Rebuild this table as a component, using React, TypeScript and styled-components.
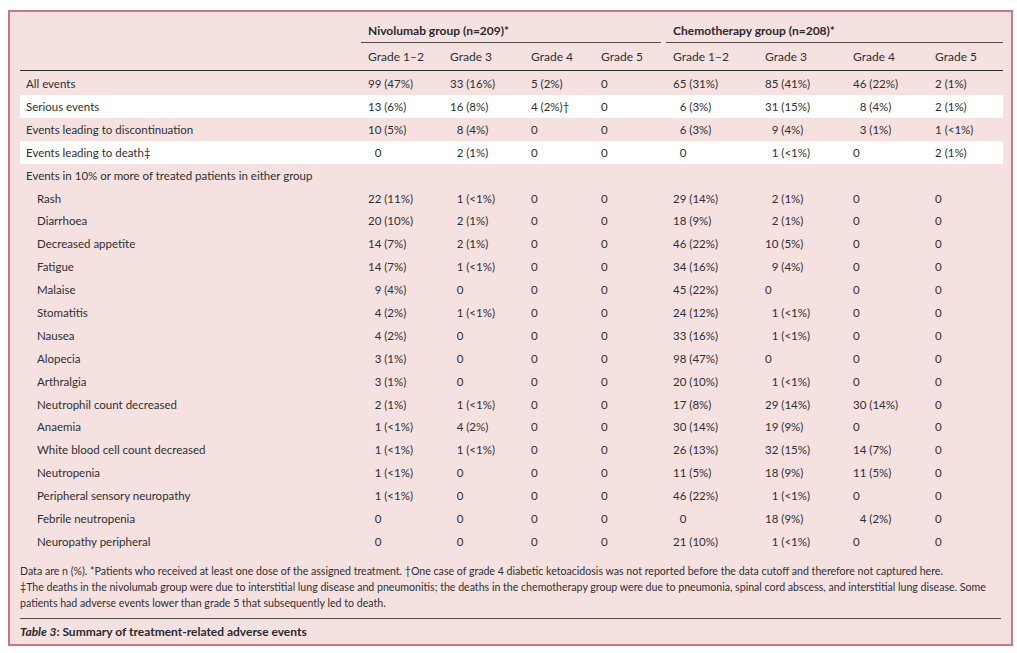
import React from 'react';
import styled, { createGlobalStyle } from 'styled-components';

const GlobalStyle = createGlobalStyle`
  html, body {
    margin: 0;
    padding: 0;
    background: #ffffff;
  }
  body {
    font-family: Lato, 'Open Sans', 'Liberation Sans', sans-serif;
    color: #2f2f2f;
  }
`;

// \u2007 = figure space, used to keep the digits lined up as in the print table
const F = '\u2007';

type Row = {
  label: string;
  values?: string[];
  indent?: boolean;
  stripe?: boolean;
};

const summaryRows: Row[] = [
  { label: 'All events', values: ['99 (47%)', '33 (16%)', '5 (2%)', '0', '65 (31%)', '85 (41%)', '46 (22%)', '2 (1%)'] },
  { label: 'Serious events', stripe: true, values: ['13 (6%)', '16 (8%)', '4 (2%)†', '0', F + '6 (3%)', '31 (15%)', F + '8 (4%)', '2 (1%)'] },
  { label: 'Events leading to discontinuation', values: ['10 (5%)', F + '8 (4%)', '0', '0', F + '6 (3%)', F + '9 (4%)', F + '3 (1%)', '1 (<1%)'] },
  { label: 'Events leading to death‡', stripe: true, values: [F + '0', F + '2 (1%)', '0', '0', F + '0', F + '1 (<1%)', '0', '2 (1%)'] },
  { label: 'Events in 10% or more of treated patients in either group' },
];

const eventRows: Row[] = [
  { label: 'Rash', values: ['22 (11%)', F + '1 (<1%)', '0', '0', '29 (14%)', F + '2 (1%)', '0', '0'] },
  { label: 'Diarrhoea', values: ['20 (10%)', F + '2 (1%)', '0', '0', '18 (9%)', F + '2 (1%)', '0', '0'] },
  { label: 'Decreased appetite', values: ['14 (7%)', F + '2 (1%)', '0', '0', '46 (22%)', '10 (5%)', '0', '0'] },
  { label: 'Fatigue', values: ['14 (7%)', F + '1 (<1%)', '0', '0', '34 (16%)', F + '9 (4%)', '0', '0'] },
  { label: 'Malaise', values: [F + '9 (4%)', F + '0', '0', '0', '45 (22%)', '0', '0', '0'] },
  { label: 'Stomatitis', values: [F + '4 (2%)', F + '1 (<1%)', '0', '0', '24 (12%)', F + '1 (<1%)', '0', '0'] },
  { label: 'Nausea', values: [F + '4 (2%)', F + '0', '0', '0', '33 (16%)', F + '1 (<1%)', '0', '0'] },
  { label: 'Alopecia', values: [F + '3 (1%)', F + '0', '0', '0', '98 (47%)', '0', '0', '0'] },
  { label: 'Arthralgia', values: [F + '3 (1%)', F + '0', '0', '0', '20 (10%)', F + '1 (<1%)', '0', '0'] },
  { label: 'Neutrophil count decreased', values: [F + '2 (1%)', F + '1 (<1%)', '0', '0', '17 (8%)', '29 (14%)', '30 (14%)', '0'] },
  { label: 'Anaemia', values: [F + '1 (<1%)', F + '4 (2%)', '0', '0', '30 (14%)', '19 (9%)', '0', '0'] },
  { label: 'White blood cell count decreased', values: [F + '1 (<1%)', F + '1 (<1%)', '0', '0', '26 (13%)', '32 (15%)', '14 (7%)', '0'] },
  { label: 'Neutropenia', values: [F + '1 (<1%)', F + '0', '0', '0', '11 (5%)', '18 (9%)', '11 (5%)', '0'] },
  { label: 'Peripheral sensory neuropathy', values: [F + '1 (<1%)', F + '0', '0', '0', '46 (22%)', F + '1 (<1%)', '0', '0'] },
  { label: 'Febrile neutropenia', values: [F + '0', F + '0', '0', '0', F + '0', '18 (9%)', F + '4 (2%)', '0'] },
  { label: 'Neuropathy peripheral', values: [F + '0', F + '0', '0', '0', '21 (10%)', F + '1 (<1%)', '0', '0'] },
].map((r) => ({ ...r, indent: true }));

const grades = ['Grade 1–2', 'Grade 3', 'Grade 4', 'Grade 5'];
const colWidths = [341, 82, 81, 70, 72, 92, 88, 82, 75];

export default function App() {
  const rows = [...summaryRows, ...eventRows];

  return (
    <>
      <GlobalStyle />
      <Frame>
        <Table>
          <colgroup>
            {colWidths.map((w, i) => (
              <col key={i} style={{ width: w }} />
            ))}
          </colgroup>
          <thead>
            <GroupRow>
              <th />
              <GroupCell colSpan={4}>
                <GroupLabel $gap={5}>Nivolumab group (n=209)*</GroupLabel>
              </GroupCell>
              <GroupCell colSpan={4}>
                <GroupLabel $gap={0}>Chemotherapy group (n=208)*</GroupLabel>
              </GroupCell>
            </GroupRow>
            <GradeRow>
              <th />
              {[...grades, ...grades].map((g, i) => (
                <GradeCell key={i}>{g}</GradeCell>
              ))}
            </GradeRow>
          </thead>
          <tbody>
            {rows.map((row) => (
              <BodyRow key={row.label} $stripe={!!row.stripe}>
                {row.values ? (
                  <>
                    <LabelCell $indent={!!row.indent}>{row.label}</LabelCell>
                    {row.values.map((v, i) => (
                      <ValueCell key={i}>{v}</ValueCell>
                    ))}
                  </>
                ) : (
                  <LabelCell $indent={false} colSpan={9}>
                    {row.label}
                  </LabelCell>
                )}
              </BodyRow>
            ))}
          </tbody>
        </Table>

        <Footnote>
          Data are n (%). *Patients who received at least one dose of the assigned treatment. †One case of
          grade 4 diabetic ketoacidosis was not reported before the data cutoff and therefore not captured here.
          <br />
          ‡The deaths in the nivolumab group were due to interstitial lung disease and pneumonitis; the deaths in
          the chemotherapy group were due to pneumonia, spinal cord abscess, and interstitial lung disease. Some
          patients had adverse events lower than grade 5 that subsequently led to death.
        </Footnote>

        <Caption>
          <em>Table 3</em>: Summary of treatment-related adverse events
        </Caption>
      </Frame>
    </>
  );
}

const Frame = styled.div`
  box-sizing: border-box;
  width: 1005px;
  height: 636px;
  margin: 10px 0 0 8px;
  padding: 6px 10px 0 10px;
  background: #f6e1e1;
  border: 2px solid #c8768a;
  display: flex;
  flex-direction: column;
`;

const Table = styled.table`
  width: 983px;
  border-collapse: collapse;
  table-layout: fixed;
  font-size: 11.5px;
  th,
  td {
    padding: 0 0 0 7px;
    text-align: left;
    white-space: nowrap;
  }
`;

const GroupRow = styled.tr`
  height: 25px;
`;

const GroupCell = styled.th`
  vertical-align: bottom;
  && {
    padding: 0;
  }
`;

const GroupLabel = styled.div<{ $gap: number }>`
  margin-right: ${(p) => p.$gap}px;
  padding: 0 0 4px 7px;
  border-bottom: 1.5px solid #4a4a4a;
  font-size: 12px;
  font-weight: 700;
  color: #2a2a2a;
`;

const GradeRow = styled.tr`
  height: 27px;
  border-bottom: 1.5px solid #2f2f2f;
`;

const GradeCell = styled.th`
  font-size: 12px;
  font-weight: 400;
  vertical-align: middle;
  && {
    padding-top: 1px;
  }
`;

const BodyRow = styled.tr<{ $stripe: boolean }>`
  height: 22.9px;
  background: ${(p) => (p.$stripe ? '#ffffff' : 'transparent')};
  &:first-child {
    height: 25px;
  }
  &:first-child td {
    padding-top: 2px;
  }
`;

const LabelCell = styled.td<{ $indent: boolean }>`
  && {
    padding-left: ${(p) => (p.$indent ? 17 : 6)}px;
  }
`;

const ValueCell = styled.td``;

const Footnote = styled.p`
  margin: 10px 0 0 0;
  font-size: 10.6px;
  line-height: 16px;
`;

const Caption = styled.div`
  margin-top: 7px;
  padding: 5px 0 0 0;
  border-top: 1.5px solid #4a4a4a;
  font-size: 12px;
  font-weight: 700;
  color: #2a2a2a;
  em {
    font-style: italic;
  }
`;
